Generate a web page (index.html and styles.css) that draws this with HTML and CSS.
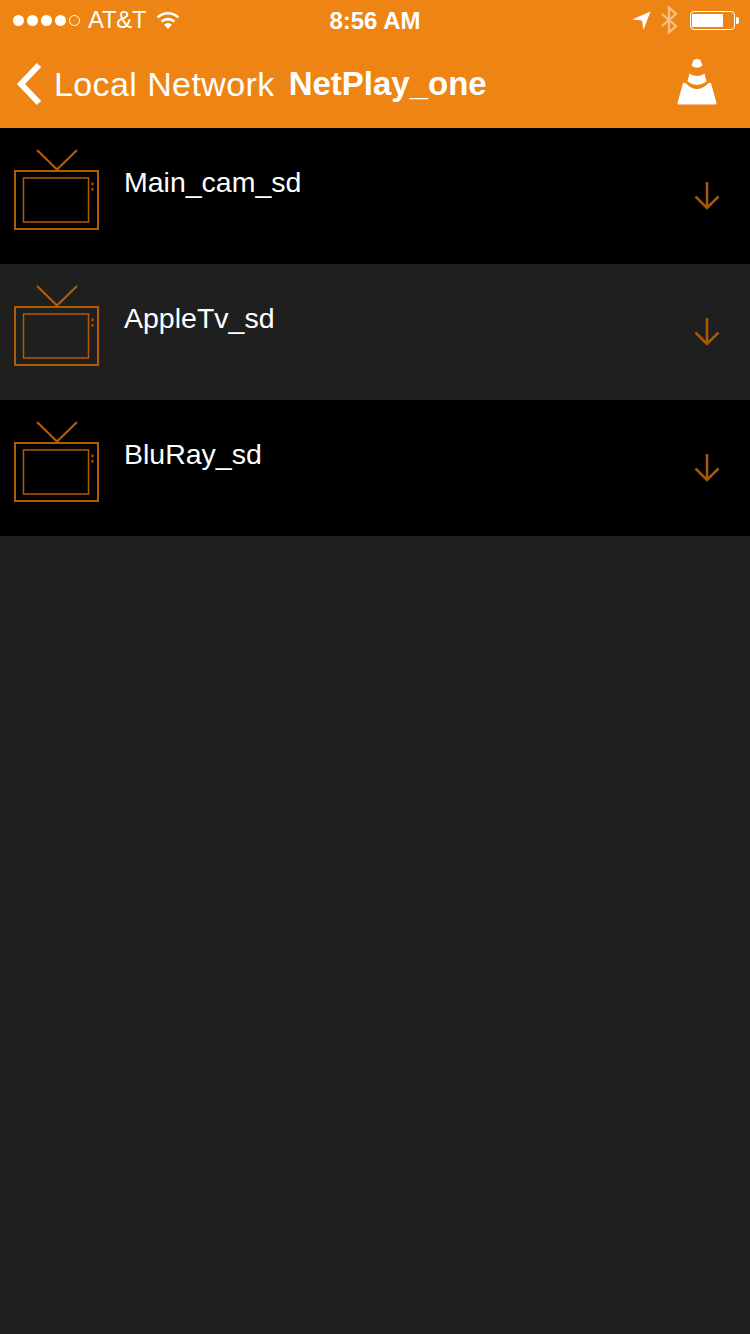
FILE: index.html
```html
<!DOCTYPE html>
<html lang="en">
<head>
<meta charset="UTF-8">
<meta name="viewport" content="width=device-width, initial-scale=1.0">
<title>NetPlay_one</title>
<link rel="stylesheet" href="styles.css">
</head>
<body>
<div class="header">
  <div class="status-bar">
    <div class="status-left">
      <div class="signal">
        <span class="dot"></span><span class="dot"></span><span class="dot"></span><span class="dot"></span><span class="dot empty"></span>
      </div>
      <span class="carrier">AT&amp;T</span>
      <svg class="wifi" width="26" height="20" viewBox="0 0 26 20">
        <path d="M13 19 L9 14.5 A6 6 0 0 1 17 14.5 Z" fill="#fff"/>
        <path d="M6.6 11.6 A9.5 9.5 0 0 1 19.4 11.6" fill="none" stroke="#fff" stroke-width="2.6"/>
        <path d="M2.6 7.4 A15 15 0 0 1 23.4 7.4" fill="none" stroke="#fff" stroke-width="2.6"/>
      </svg>
    </div>
    <div class="clock">8:56 AM</div>
    <div class="status-right">
      <svg width="20" height="20" viewBox="0 0 20 20"><path d="M1 9.5 L19.5 1.5 L12.5 20 L11 10.5 Z" fill="#fff"/></svg>
      <svg class="bluetooth" width="18" height="28" viewBox="0 0 18 28">
        <path d="M2 8 L16 20 L9 26.5 V1.5 L16 8 L2 20" fill="none" stroke="#fff" stroke-opacity="0.5" stroke-width="2.2"/>
      </svg>
      <div class="battery"><div class="battery-level"></div></div>
      <div class="battery-tip"></div>
    </div>
  </div>
  <div class="nav-bar">
    <svg class="back-icon" width="28" height="44" viewBox="0 0 28 44">
      <path d="M24 3 L6 22 L24 41" fill="none" stroke="#fff" stroke-width="6"/>
    </svg>
    <span class="back-label">Local Network</span>
    <span class="nav-title">NetPlay_one</span>
    <svg class="cone" width="42" height="48" viewBox="0 0 42 48">
      <path d="M17.5 2 Q21 0 24.5 2 L26.5 7.5 Q21 12 15.5 7.5 Z" fill="#fff"/>
      <path d="M13.5 15.5 Q21 20.5 28.5 15.5 L30.5 23.5 Q21 30.5 11.5 23.5 Z" fill="#fff"/>
      <path d="M7 25 L9.5 25 Q21 37 32.5 25 L35 25 L40.5 45 Q40.5 46.5 39 46.5 L3 46.5 Q1.5 46.5 1.5 45 Z" fill="#fff"/>
    </svg>
  </div>
</div>

<ul class="server-list">
  <li class="server-row">
    <svg class="tv-icon" width="86" height="84" viewBox="0 0 86 84">
      <path d="M23 2 L43 21.5 L63 2" fill="none" stroke="#b25c04" stroke-width="2.2"/>
      <rect x="1" y="23" width="83" height="58" fill="none" stroke="#b25c04" stroke-width="2"/>
      <rect x="9.5" y="30" width="65" height="44" fill="none" stroke="#b25c04" stroke-width="1.5"/>
      <rect x="77.5" y="34.5" width="2" height="2.5" fill="#b25c04"/>
      <rect x="77.5" y="40" width="2" height="2.5" fill="#b25c04"/>
    </svg>
    <span class="server-name">Main_cam_sd</span>
    <svg class="download-icon" width="28" height="30" viewBox="0 0 28 30">
      <path d="M14 1 V27 M2.5 15.5 L14 27 L25.5 15.5" fill="none" stroke="#a95806" stroke-width="2.5"/>
    </svg>
  </li>
  <li class="server-row alt">
    <svg class="tv-icon" width="86" height="84" viewBox="0 0 86 84">
      <path d="M23 2 L43 21.5 L63 2" fill="none" stroke="#b25c04" stroke-width="2.2"/>
      <rect x="1" y="23" width="83" height="58" fill="none" stroke="#b25c04" stroke-width="2"/>
      <rect x="9.5" y="30" width="65" height="44" fill="none" stroke="#b25c04" stroke-width="1.5"/>
      <rect x="77.5" y="34.5" width="2" height="2.5" fill="#b25c04"/>
      <rect x="77.5" y="40" width="2" height="2.5" fill="#b25c04"/>
    </svg>
    <span class="server-name">AppleTv_sd</span>
    <svg class="download-icon" width="28" height="30" viewBox="0 0 28 30">
      <path d="M14 1 V27 M2.5 15.5 L14 27 L25.5 15.5" fill="none" stroke="#a95806" stroke-width="2.5"/>
    </svg>
  </li>
  <li class="server-row">
    <svg class="tv-icon" width="86" height="84" viewBox="0 0 86 84">
      <path d="M23 2 L43 21.5 L63 2" fill="none" stroke="#b25c04" stroke-width="2.2"/>
      <rect x="1" y="23" width="83" height="58" fill="none" stroke="#b25c04" stroke-width="2"/>
      <rect x="9.5" y="30" width="65" height="44" fill="none" stroke="#b25c04" stroke-width="1.5"/>
      <rect x="77.5" y="34.5" width="2" height="2.5" fill="#b25c04"/>
      <rect x="77.5" y="40" width="2" height="2.5" fill="#b25c04"/>
    </svg>
    <span class="server-name">BluRay_sd</span>
    <svg class="download-icon" width="28" height="30" viewBox="0 0 28 30">
      <path d="M14 1 V27 M2.5 15.5 L14 27 L25.5 15.5" fill="none" stroke="#a95806" stroke-width="2.5"/>
    </svg>
  </li>
</ul>
</body>
</html>
```

FILE: styles.css
```css
html, body {
  margin: 0;
  height: 100%;
}
body {
  font-family: "Liberation Sans", Arial, sans-serif;
  background-color: #1f1f1f;
  color: #fff;
  overflow: hidden;
}
.header {
  background-color: #ee8413;
  height: 128px;
}
.status-bar {
  height: 40px;
  display: flex;
  align-items: center;
  justify-content: space-between;
  padding: 0 11px 0 13px;
  position: relative;
}
.status-left {
  display: flex;
  align-items: center;
}
.signal {
  display: flex;
  gap: 3px;
}
.dot {
  width: 11px;
  height: 11px;
  border-radius: 50%;
  background-color: #fff;
  box-sizing: border-box;
}
.dot.empty {
  background: none;
  border: 1px solid #fff;
}
.carrier {
  font-size: 24px;
  letter-spacing: -0.3px;
  margin-left: 8px;
}
.wifi {
  margin-left: 9px;
}
.clock {
  position: absolute;
  left: 0;
  right: 0;
  top: 6px;
  text-align: center;
  font-size: 24px;
  font-weight: bold;
  line-height: 30px;
  pointer-events: none;
}
.status-right {
  display: flex;
  align-items: center;
}
.bluetooth {
  margin-left: 9px;
}
.battery {
  width: 45px;
  height: 19px;
  margin-left: 12px;
  box-sizing: border-box;
  border: 1px solid #fff;
  border-radius: 4px;
  padding: 2px 1px;
}
.battery-level {
  width: 31px;
  height: 13px;
  background-color: #fff;
}
.battery-tip {
  width: 3px;
  height: 7px;
  margin-left: 1px;
  background-color: #fff;
  border-radius: 0 2px 2px 0;
}
.nav-bar {
  height: 88px;
  display: flex;
  align-items: center;
  padding-left: 15px;
}
.back-icon {
  flex-shrink: 0;
}
.back-label {
  font-size: 34px;
  letter-spacing: 0.4px;
  margin-left: 11px;
}
.nav-title {
  font-size: 33px;
  font-weight: bold;
  margin-left: 14px;
}
.cone {
  margin-left: auto;
  margin-right: 32px;
  margin-bottom: 4px;
}
.server-list {
  list-style: none;
  margin: 0;
  padding: 0;
}
.server-row {
  height: 136px;
  background-color: #000;
  display: flex;
  align-items: flex-start;
  padding-left: 14px;
  padding-right: 29px;
}
.server-row.alt {
  background-color: #1f1f1f;
}
.tv-icon {
  margin-top: 20px;
  flex-shrink: 0;
}
.server-name {
  font-size: 28.5px;
  margin-left: 24px;
  margin-top: 37px;
  line-height: 34px;
}
.download-icon {
  margin-left: auto;
  margin-top: 53px;
}
```
